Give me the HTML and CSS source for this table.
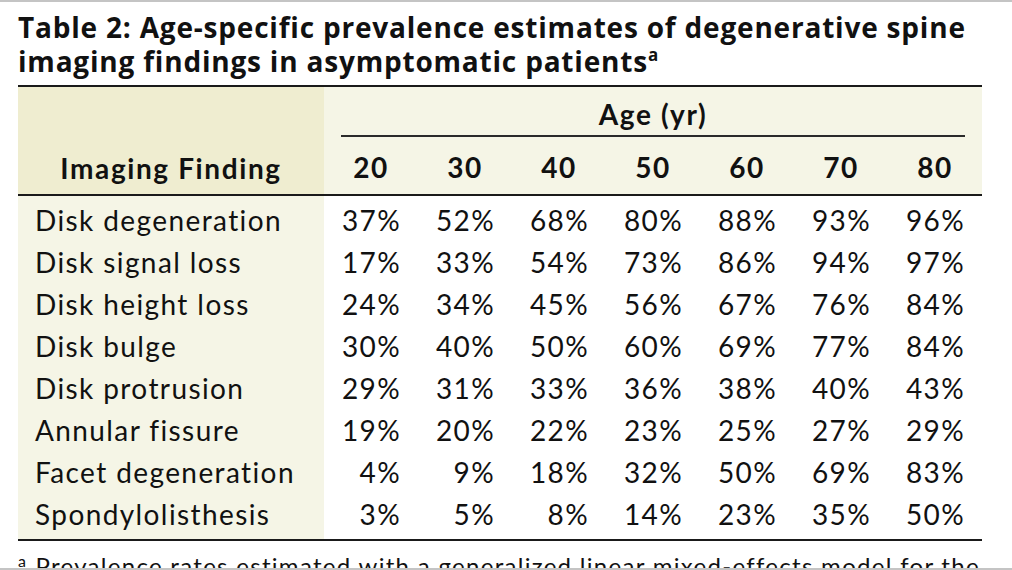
FILE: index.html
```html
<!DOCTYPE html>
<html lang="en">
<head>
<meta charset="utf-8">
<title>Table 2</title>
<link rel="stylesheet" href="styles.css">
</head>
<body>
<div class="page">
  <h1 class="title">Table 2: Age-specific prevalence estimates of degenerative spine<br>imaging findings in asymptomatic patients<sup class="title-sup">a</sup></h1>
  <table class="data">
    <colgroup>
      <col class="c-first">
      <col class="c-num"><col class="c-num"><col class="c-num"><col class="c-num"><col class="c-num"><col class="c-num"><col class="c-num">
    </colgroup>
    <thead>
      <tr class="h1row">
        <th class="h-find" rowspan="2">Imaging Finding</th>
        <th class="h-age" colspan="7"><div class="age-label">Age (yr)</div></th>
      </tr>
      <tr class="h2row">
        <th>20</th><th>30</th><th>40</th><th>50</th><th>60</th><th>70</th><th>80</th>
      </tr>
    </thead>
    <tbody>
      <tr><td>Disk degeneration</td><td>37%</td><td>52%</td><td>68%</td><td>80%</td><td>88%</td><td>93%</td><td>96%</td></tr>
      <tr><td>Disk signal loss</td><td>17%</td><td>33%</td><td>54%</td><td>73%</td><td>86%</td><td>94%</td><td>97%</td></tr>
      <tr><td>Disk height loss</td><td>24%</td><td>34%</td><td>45%</td><td>56%</td><td>67%</td><td>76%</td><td>84%</td></tr>
      <tr><td>Disk bulge</td><td>30%</td><td>40%</td><td>50%</td><td>60%</td><td>69%</td><td>77%</td><td>84%</td></tr>
      <tr><td>Disk protrusion</td><td>29%</td><td>31%</td><td>33%</td><td>36%</td><td>38%</td><td>40%</td><td>43%</td></tr>
      <tr><td>Annular fissure</td><td>19%</td><td>20%</td><td>22%</td><td>23%</td><td>25%</td><td>27%</td><td>29%</td></tr>
      <tr><td>Facet degeneration</td><td>4%</td><td>9%</td><td>18%</td><td>32%</td><td>50%</td><td>69%</td><td>83%</td></tr>
      <tr><td>Spondylolisthesis</td><td>3%</td><td>5%</td><td>8%</td><td>14%</td><td>23%</td><td>35%</td><td>50%</td></tr>
    </tbody>
  </table>
  <p class="footnote"><sup class="fn-mark">a</sup> Prevalence rates estimated with a generalized linear mixed-effects model for the age of the patient.</p>
</div>
</body>
</html>
```
FILE: styles.css
```css
html, body {
  margin: 0;
  padding: 0;
  background: #ffffff;
}
body {
  font-family: "Lato", "Open Sans", sans-serif;
  color: #111111;
  overflow: hidden;
}
.page {
  box-sizing: border-box;
  height: 570px;
  overflow: hidden;
  border-top: 2px solid #c4c4c4;
  border-bottom: 2px solid #c4c4c4;
  padding: 0 30px 0 18px;
}
.title {
  margin: 8px 0 0 0;
  font-family: "Open Sans", "Lato", sans-serif;
  font-size: 28px;
  line-height: 34px;
  font-weight: 700;
  letter-spacing: 0.8px;
  white-space: nowrap;
}
.title-sup {
  font-size: 17px;
  line-height: 0;
  vertical-align: 11px;
  letter-spacing: 0;
}
.data {
  margin-top: 7px;
  width: 964px;
  table-layout: fixed;
  border-collapse: collapse;
  border-top: 2px solid #1a1a1a;
  border-bottom: 2px solid #1a1a1a;
}
.c-first { width: 306px; }
.c-num { width: 94px; }
.data thead {
  background: #f5f5e6;
  border-bottom: 2px solid #1a1a1a;
}
.data th {
  font-weight: 700;
  font-size: 28px;
  letter-spacing: 1.6px;
  padding: 0;
  text-align: center;
}
.h-find {
  background: #efedd0;
  vertical-align: bottom;
  padding-bottom: 9px !important;
}
.h1row { height: 51px; }
.h-age { vertical-align: bottom; }
.age-label {
  margin: 0 17px;
  border-bottom: 2px solid #2a2a2a;
  padding-bottom: 4px;
}
.h2row th {
  height: 55px;
  vertical-align: middle;
  padding-top: 2px;
}
.data td {
  font-size: 28px;
  font-weight: 400;
  letter-spacing: 1.4px;
  height: 42px;
  padding: 0 17px 0 0;
  text-align: right;
  vertical-align: middle;
}
.data td:first-child {
  background: #f5f5e6;
  text-align: left;
  padding: 0 0 0 17px;
}
.data tbody tr:first-child td { padding-top: 3px; }
.data tbody tr:last-child td { padding-bottom: 4px; }
.footnote {
  margin: 10px 0 0 0;
  font-size: 24px;
  line-height: 30px;
  letter-spacing: 1.3px;
}
.fn-mark {
  font-size: 16px;
  line-height: 0;
  vertical-align: 8px;
  margin-right: 2px;
  letter-spacing: 0;
}
```
